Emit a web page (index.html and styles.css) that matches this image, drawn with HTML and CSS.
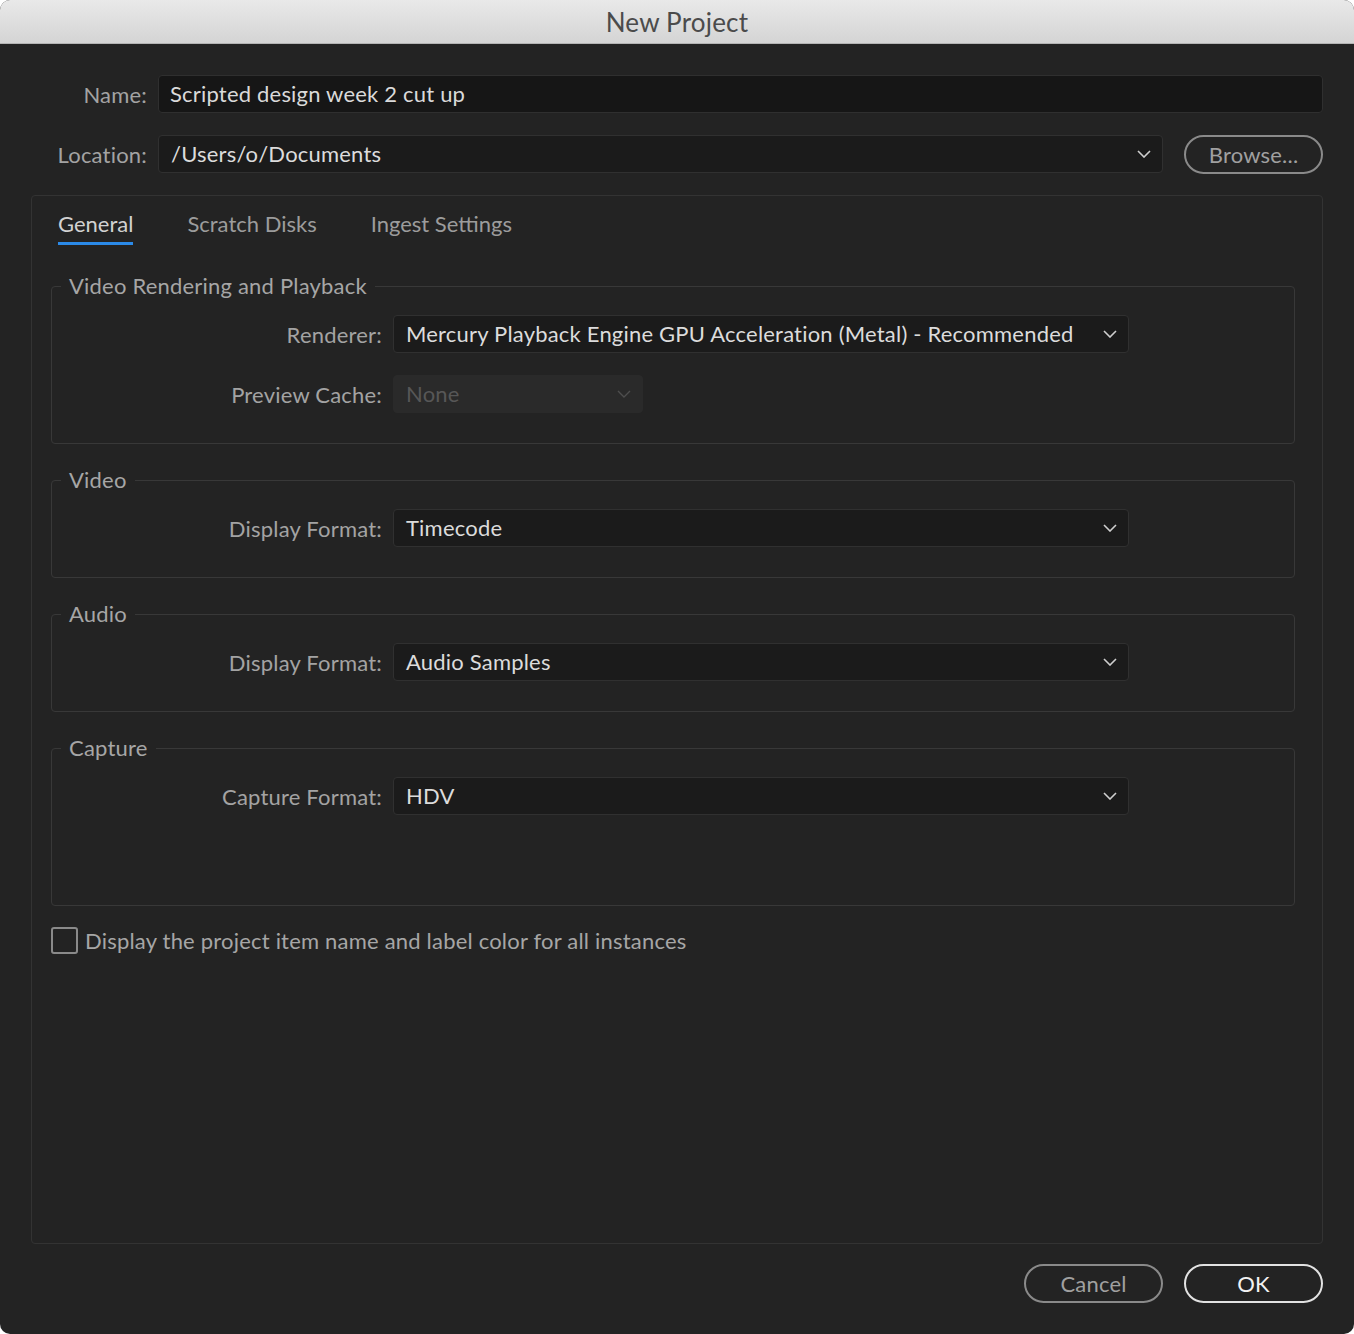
FILE: index.html
```html
<!DOCTYPE html>
<html lang="en">
<head>
<meta charset="utf-8">
<title>New Project</title>
<link rel="stylesheet" href="styles.css">
</head>
<body>
<div class="window">
  <div class="titlebar">New Project</div>
  <div class="dialog">
    <div class="field-row">
      <label class="top-label">Name:</label>
      <div class="textbox">Scripted design week 2 cut up</div>
    </div>
    <div class="field-row">
      <label class="top-label">Location:</label>
      <div class="select loc-select">
        <span>/Users/o/Documents</span>
        <svg class="chev" viewBox="0 0 14 8" width="14" height="8"><path d="M1 1 L7 7 L13 1" fill="none" stroke="#cfcfcf" stroke-width="1.6"/></svg>
      </div>
      <div class="pill-btn">Browse...</div>
    </div>

    <div class="panel">
      <div class="tabs">
        <div class="tab active">General</div>
        <div class="tab">Scratch Disks</div>
        <div class="tab">Ingest Settings</div>
      </div>

      <fieldset class="group">
        <legend>Video Rendering and Playback</legend>
        <div class="row">
          <span class="row-label">Renderer:</span>
          <div class="select wide">
            <span>Mercury Playback Engine GPU Acceleration (Metal) - Recommended</span>
            <svg class="chev" viewBox="0 0 14 8" width="14" height="8"><path d="M1 1 L7 7 L13 1" fill="none" stroke="#cfcfcf" stroke-width="1.6"/></svg>
          </div>
        </div>
        <div class="row">
          <span class="row-label">Preview Cache:</span>
          <div class="select narrow disabled">
            <span>None</span>
            <svg class="chev" viewBox="0 0 14 8" width="14" height="8"><path d="M1 1 L7 7 L13 1" fill="none" stroke="#4e4e4e" stroke-width="1.4"/></svg>
          </div>
        </div>
      </fieldset>

      <fieldset class="group">
        <legend>Video</legend>
        <div class="row">
          <span class="row-label">Display Format:</span>
          <div class="select wide">
            <span>Timecode</span>
            <svg class="chev" viewBox="0 0 14 8" width="14" height="8"><path d="M1 1 L7 7 L13 1" fill="none" stroke="#cfcfcf" stroke-width="1.6"/></svg>
          </div>
        </div>
      </fieldset>

      <fieldset class="group">
        <legend>Audio</legend>
        <div class="row">
          <span class="row-label">Display Format:</span>
          <div class="select wide">
            <span>Audio Samples</span>
            <svg class="chev" viewBox="0 0 14 8" width="14" height="8"><path d="M1 1 L7 7 L13 1" fill="none" stroke="#cfcfcf" stroke-width="1.6"/></svg>
          </div>
        </div>
      </fieldset>

      <fieldset class="group capture">
        <legend>Capture</legend>
        <div class="row">
          <span class="row-label">Capture Format:</span>
          <div class="select wide">
            <span>HDV</span>
            <svg class="chev" viewBox="0 0 14 8" width="14" height="8"><path d="M1 1 L7 7 L13 1" fill="none" stroke="#cfcfcf" stroke-width="1.6"/></svg>
          </div>
        </div>
      </fieldset>

      <div class="check-row">
        <span class="checkbox"></span>
        <span class="check-label">Display the project item name and label color for all instances</span>
      </div>
    </div>

    <div class="buttons">
      <div class="pill-btn">Cancel</div>
      <div class="pill-btn ok">OK</div>
    </div>
  </div>
</div>
</body>
</html>
```

FILE: styles.css
```css
html, body {
  margin: 0;
  padding: 0;
  background: #ffffff;
}
body {
  font-family: "Lato", "Open Sans", sans-serif;
  font-size: 22px;
  letter-spacing: 0.2px;
}
.window {
  width: 1354px;
  height: 1334px;
  border-radius: 10px;
  overflow: hidden;
  background: #232323;
  display: flex;
  flex-direction: column;
}
.titlebar {
  height: 43px;
  flex: none;
  background: linear-gradient(#e9e9e9, #d4d4d4);
  border-bottom: 1px solid #b4b4b4;
  color: #4b4b4b;
  font-size: 26px;
  line-height: 45px;
  text-align: center;
}
.dialog {
  flex: 1;
  display: flex;
  flex-direction: column;
  padding: 31px 31px 31px 31px;
  min-height: 0;
}
.field-row {
  display: flex;
  align-items: center;
  height: 38px;
  margin-bottom: 22px;
}
.top-label {
  width: 116px;
  flex: none;
  text-align: right;
  color: #a3a3a3;
  margin-right: 11px;
}
.textbox {
  flex: 1;
  box-sizing: border-box;
  height: 38px;
  border: 1px solid #2f2f2f;
  border-radius: 4px;
  background: #161616;
  color: #dadada;
  padding-left: 11px;
  line-height: 35px;
}
.select {
  display: flex;
  align-items: center;
  justify-content: space-between;
  box-sizing: border-box;
  height: 38px;
  border: 1px solid #303030;
  border-radius: 4px;
  background: #1b1b1b;
  color: #dcdcdc;
  padding: 0 11px 1px 12px;
}
.loc-select {
  flex: 1;
  margin-right: 21px;
}
.chev {
  flex: none;
}
.pill-btn {
  box-sizing: border-box;
  width: 139px;
  height: 39px;
  border: 2px solid #8a8a8a;
  border-radius: 20px;
  color: #a0a0a0;
  text-align: center;
  line-height: 35px;
  flex: none;
}
.pill-btn.ok {
  border-color: #e2e2e2;
  color: #f2f2f2;
}
.panel {
  flex: 1;
  border: 1px solid #333333;
  border-radius: 4px;
  padding: 0 27px 0 19px;
  display: flex;
  flex-direction: column;
}
.tabs {
  display: flex;
  gap: 54px;
  margin-left: 7px;
  padding-top: 15px;
}
.tab {
  color: #9c9c9c;
  line-height: 26px;
  padding-bottom: 8px;
  letter-spacing: 0;
}
.tab.active {
  color: #d2d2d2;
  border-bottom: 3px solid #2b8ae8;
  padding-bottom: 5px;
}
.group {
  margin: 23px 0 0 0;
  padding: 16px 0 30px 0;
  border: 1px solid #383838;
  border-radius: 4px;
  min-width: 0;
}
.tabs + .group {
  margin-top: 28px;
}
.group.capture {
  padding-bottom: 90px;
}
.group legend {
  margin-left: 9px;
  padding: 0 8px;
  color: #a6a6a6;
  line-height: 26px;
}
.row {
  display: flex;
  align-items: center;
  height: 38px;
}
.row + .row {
  margin-top: 22px;
}
.row-label {
  width: 330px;
  flex: none;
  text-align: right;
  color: #a3a3a3;
  margin-right: 11px;
}
.select.wide {
  width: 736px;
}
.select.narrow {
  width: 250px;
}
.select.disabled {
  background: #2a2a2a;
  border-color: #2a2a2a;
  color: #575757;
}
.check-row {
  display: flex;
  align-items: center;
  margin-top: 21px;
  height: 26px;
}
.checkbox {
  box-sizing: border-box;
  width: 27px;
  height: 27px;
  border: 2px solid #8a8a8a;
  border-radius: 3px;
  margin-right: 7px;
  flex: none;
}
.check-label {
  color: #a6a6a6;
}
.buttons {
  display: flex;
  justify-content: flex-end;
  gap: 21px;
  margin-top: 20px;
}
```
